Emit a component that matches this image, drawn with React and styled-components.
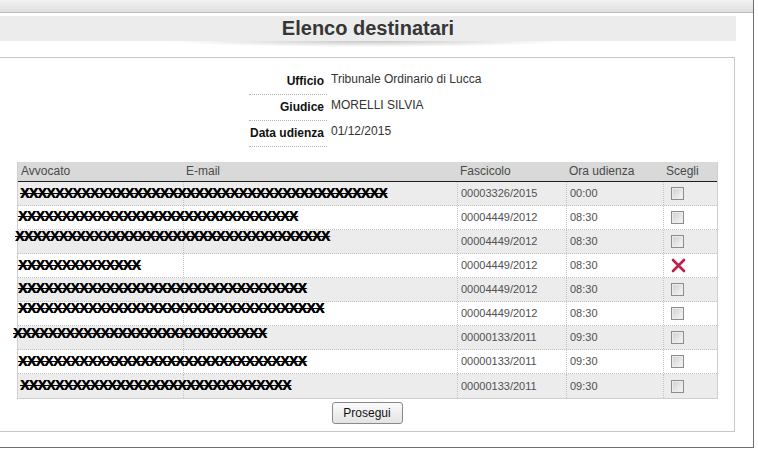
import React from "react";
import styled, { createGlobalStyle } from "styled-components";

const Global = createGlobalStyle`
  html, body { margin: 0; padding: 0; background: #fff; }
  body { font-family: "Liberation Sans", Arial, sans-serif; width: 758px; height: 453px; overflow: hidden; }
`;

const Wrapper = styled.div`
  width: 753px;
  border-right: 1px solid #6f6f6f;
  border-bottom: 1px solid #6f6f6f;
  padding-bottom: 15px;
`;

const TopStrip = styled.div`
  height: 12px;
  background: linear-gradient(#f3f3f3, #dedede);
  border-bottom: 1px solid #bdbdbd;
`;

const TitleBar = styled.div`
  margin-top: 3px;
  width: 736px;
  height: 25px;
  background: #ececec;
  display: flex;
  align-items: center;
  justify-content: center;
`;

const Title = styled.h1`
  margin: 0;
  font-size: 20px;
  font-weight: bold;
  color: #363636;
  line-height: 25px;
`;

const TitleShadow = styled.div`
  width: 736px;
  height: 16px;
  background: radial-gradient(ellipse 200px 6px at 50% 0, rgba(0, 0, 0, 0.22), rgba(0, 0, 0, 0));
`;

const Panel = styled.div`
  width: 735px;
  box-sizing: border-box;
  border: 1px solid #c8c8c8;
  border-left: none;
  padding: 11px 0 7px;
  display: flex;
  flex-direction: column;
`;

const InfoGrid = styled.div`
  align-self: center;
  display: grid;
  grid-template-columns: 78px 160px;
  margin-left: 2px;
`;

const InfoLabel = styled.div`
  height: 26px;
  box-sizing: border-box;
  border-bottom: 1px dotted #b5b5b5;
  text-align: right;
  font-size: 12px;
  line-height: 14px;
  font-weight: bold;
  color: #111;
  padding: 5px 3px 0 0;
`;

const InfoValue = styled.div`
  height: 26px;
  box-sizing: border-box;
  font-size: 12px;
  line-height: 14px;
  color: #333;
  padding: 3px 0 0 4px;
`;

const Table = styled.div`
  margin: 15px 0 0 17px;
  width: 701px;
  box-sizing: border-box;
  border-left: 1px solid #cfcfcf;
  border-right: 1px solid #cfcfcf;
  border-bottom: 1px solid #cfcfcf;
`;

const cols = "165px 274px 109px 97px 54px";

const HeadRow = styled.div`
  display: grid;
  grid-template-columns: ${cols};
  height: 20px;
  box-sizing: border-box;
  background: #d9d9d9;
  border-bottom: 1px solid #1e1e1e;
`;

const HeadCell = styled.div`
  font-size: 12px;
  line-height: 19px;
  color: #4a4a4a;
  padding-left: 3px;
`;

const Row = styled.div`
  position: relative;
  display: grid;
  grid-template-columns: ${cols};
  height: 24px;
  box-sizing: border-box;
  background: ${(p) => (p.$alt ? "#ececec" : "#ffffff")};
  border-bottom: ${(p) => (p.$last ? "none" : "1px dotted #c4c4c4")};
`;

const Cell = styled.div`
  font-size: 11px;
  line-height: 23px;
  color: #505050;
  padding-left: 3px;
  white-space: nowrap;
  border-left: ${(p) => (p.$first ? "none" : "1px dotted #c4c4c4")};
  display: flex;
  align-items: center;
`;

const CheckCell = styled(Cell)`
  padding-left: 7px;
`;

const Check = styled.span`
  display: inline-block;
  width: 13px;
  height: 13px;
  box-sizing: border-box;
  border: 1px solid #8c8c8c;
  background: linear-gradient(135deg, #d0d0d0, #f7f7f7);
  box-shadow: inset 0 0 0 1px #ececec;
`;

const Redact = styled.span`
  position: absolute;
  left: ${(p) => p.$x}px;
  top: ${(p) => 4 + p.$dy}px;
  font-size: 14px;
  line-height: 14px;
  font-weight: bold;
  color: #000;
  letter-spacing: -0.6px;
  text-decoration: line-through;
  text-decoration-thickness: 1px;
  text-shadow: 0.4px 0 0 #000;
  white-space: nowrap;
  pointer-events: none;
`;

const ButtonRow = styled.div`
  display: flex;
  justify-content: center;
  margin-top: 3px;
`;

const Button = styled.button`
  width: 71px;
  height: 22px;
  font-family: "Liberation Sans", Arial, sans-serif;
  font-size: 12px;
  color: #111;
  border: 1px solid #8a8a8a;
  border-radius: 3px;
  background: linear-gradient(#fbfbfb, #e3e3e3);
  padding: 0;
`;

const RedCross = () => (
  <svg width="15" height="15" viewBox="0 0 15 15">
    <path d="M2 2 L13 13 M13 2 L2 13" stroke="#c01d48" strokeWidth="2.6" strokeLinecap="round" />
  </svg>
);

const rows = [
  { f: "00003326/2015", o: "00:00", n: 42, x: 2, dy: 0 },
  { f: "00004449/2012", o: "08:30", n: 32, x: 0, dy: -1 },
  { f: "00004449/2012", o: "08:30", n: 36, x: -3, dy: -5 },
  { f: "00004449/2012", o: "08:30", n: 14, x: 0, dy: 0, checked: true },
  { f: "00004449/2012", o: "08:30", n: 33, x: 0, dy: -1 },
  { f: "00004449/2012", o: "08:30", n: 35, x: 0, dy: -5 },
  { f: "00000133/2011", o: "09:30", n: 29, x: -5, dy: -4 },
  { f: "00000133/2011", o: "09:30", n: 33, x: 0, dy: 0 },
  { f: "00000133/2011", o: "09:30", n: 31, x: 2, dy: 0 },
];

export default function App() {
  return (
    <>
      <Global />
      <Wrapper>
        <TopStrip />
        <TitleBar>
          <Title>Elenco destinatari</Title>
        </TitleBar>
        <TitleShadow />
        <Panel>
          <InfoGrid>
            <InfoLabel>Ufficio</InfoLabel>
            <InfoValue>Tribunale Ordinario di Lucca</InfoValue>
            <InfoLabel>Giudice</InfoLabel>
            <InfoValue>MORELLI SILVIA</InfoValue>
            <InfoLabel>Data udienza</InfoLabel>
            <InfoValue>01/12/2015</InfoValue>
          </InfoGrid>
          <Table>
            <HeadRow>
              <HeadCell>Avvocato</HeadCell>
              <HeadCell>E-mail</HeadCell>
              <HeadCell>Fascicolo</HeadCell>
              <HeadCell>Ora udienza</HeadCell>
              <HeadCell>Scegli</HeadCell>
            </HeadRow>
            {rows.map((r, i) => (
              <Row key={i} $alt={i % 2 === 0} $last={i === rows.length - 1}>
                <Cell $first />
                <Cell />
                <Cell>{r.f}</Cell>
                <Cell>{r.o}</Cell>
                <CheckCell>{r.checked ? <RedCross /> : <Check />}</CheckCell>
                <Redact $x={r.x} $dy={r.dy}>{"X".repeat(r.n)}</Redact>
              </Row>
            ))}
          </Table>
          <ButtonRow>
            <Button>Prosegui</Button>
          </ButtonRow>
        </Panel>
      </Wrapper>
    </>
  );
}
